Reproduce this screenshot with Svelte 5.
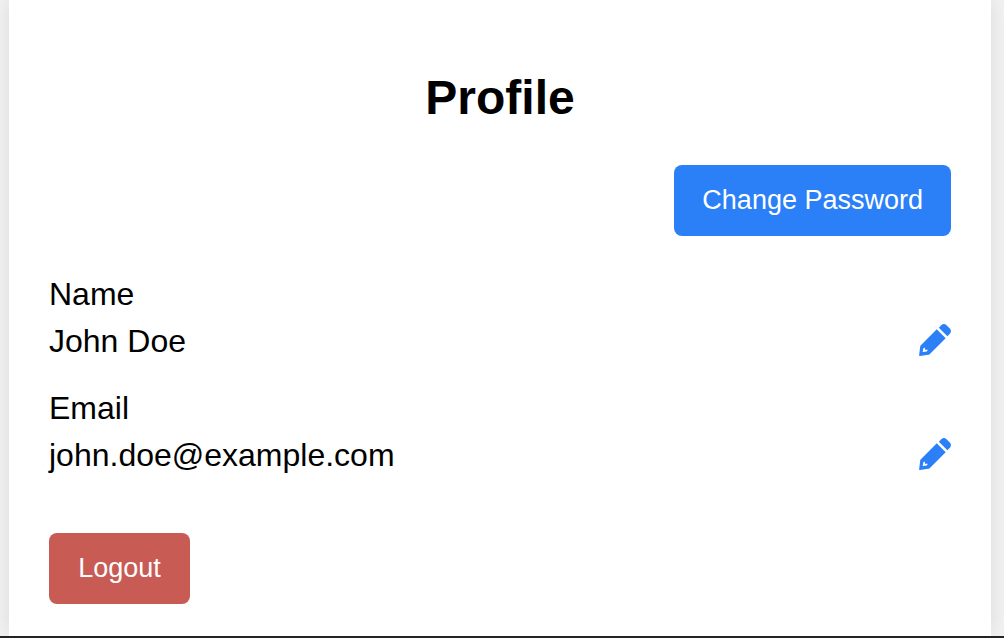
<script>
  const fields = [
    { label: 'Name', value: 'John Doe' },
    { label: 'Email', value: 'john.doe@example.com' }
  ];
</script>

<div class="page">
  <main class="card">
    <h1>Profile</h1>
    <div class="actions">
      <button class="primary" type="button">Change Password</button>
    </div>
    <dl>
      {#each fields as field}
        <div class="field">
          <dt>{field.label}</dt>
          <dd>
            <span>{field.value}</span>
            <button class="edit" type="button" aria-label={`Edit ${field.label}`}>
              <svg viewBox="0 0 512 512" aria-hidden="true">
                <path d="M318 59l38-38c28-28 62-24 84-2l53 53c24 24 25 58 1 82l-40 40z" />
                <path fill-rule="evenodd" d="M284 85l143 143L170 482q-9 9-22 11L15 511Q0 513 2 498L19 361q2-12 11-21zM92 374L70 388 58 448l66-10 18-26-46 0z" />
              </svg>
            </button>
          </dd>
        </div>
      {/each}
    </dl>
    <button class="danger" type="button">Logout</button>
  </main>
</div>

<style>
  :global(body) {
    margin: 0;
    background: #f2f2f2;
  }

  .page {
    box-sizing: border-box;
    display: flex;
    min-height: 100vh;
    padding: 0 13px 0 9px;
    overflow: hidden;
    border-bottom: 2px solid #242424;
    color: #000;
    font: 32px/37px "Liberation Sans", Arial, sans-serif;
  }

  .card {
    flex: 1;
    min-width: 0;
    padding: 70px 40px 30px;
    background: #fff;
    box-shadow: 0 0 20px rgba(0, 0, 0, 0.1);
  }

  h1 {
    margin: 0 0 40px;
    font-size: 48px;
    line-height: 55px;
    text-align: center;
  }

  .actions {
    display: flex;
    justify-content: flex-end;
    margin-bottom: 40px;
  }

  button {
    border: 0;
    font-family: inherit;
    cursor: pointer;
  }

  .primary,
  .danger {
    min-width: 141px;
    padding: 20px 28px;
    border-radius: 8px;
    color: #fff;
    font-size: 27px;
    line-height: 31px;
  }

  .primary {
    background: #2b80f8;
  }

  .danger {
    background: #c95b55;
  }

  dl {
    margin: 0 0 59px;
  }

  .field + .field {
    margin-top: 30px;
  }

  dd {
    display: flex;
    align-items: flex-start;
    justify-content: space-between;
    margin: 10px 0 0;
  }

  .edit {
    display: flex;
    padding: 1px 0 0;
    background: none;
    color: #2b80f8;
  }

  svg {
    width: 32px;
    height: 32px;
    fill: currentColor;
  }
</style>
